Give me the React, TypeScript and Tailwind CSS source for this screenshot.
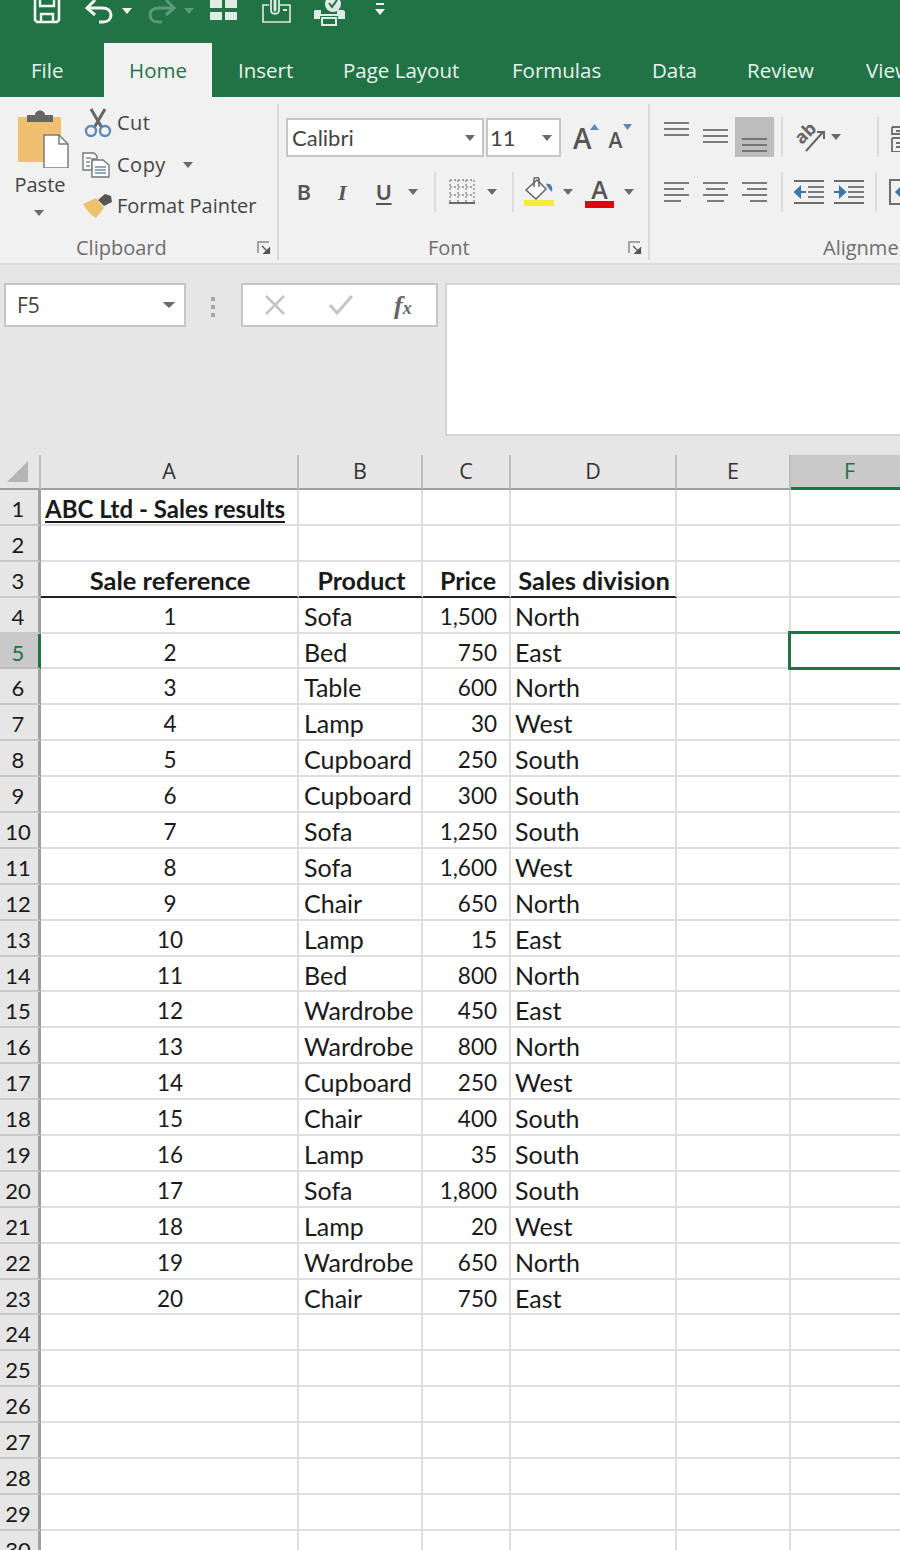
import React from "react";

const ui = "font-['Open_Sans','Noto_Sans',sans-serif]";
const cal = "font-['Lato','Liberation_Sans',sans-serif]";

type Row = [string, string, string, string];
const rows: Row[] = [
  ["1", "Sofa", "1,500", "North"],
  ["2", "Bed", "750", "East"],
  ["3", "Table", "600", "North"],
  ["4", "Lamp", "30", "West"],
  ["5", "Cupboard", "250", "South"],
  ["6", "Cupboard", "300", "South"],
  ["7", "Sofa", "1,250", "South"],
  ["8", "Sofa", "1,600", "West"],
  ["9", "Chair", "650", "North"],
  ["10", "Lamp", "15", "East"],
  ["11", "Bed", "800", "North"],
  ["12", "Wardrobe", "450", "East"],
  ["13", "Wardrobe", "800", "North"],
  ["14", "Cupboard", "250", "West"],
  ["15", "Chair", "400", "South"],
  ["16", "Lamp", "35", "South"],
  ["17", "Sofa", "1,800", "South"],
  ["18", "Lamp", "20", "West"],
  ["19", "Wardrobe", "650", "North"],
  ["20", "Chair", "750", "East"],
];

const Caret = ({ color = "#6a6a6a", className = "" }: { color?: string; className?: string }) => (
  <svg width="10" height="6" viewBox="0 0 10 6" className={`shrink-0 ${className}`}>
    <path d="M0 0H10L5 6Z" fill={color} />
  </svg>
);

const Sep = ({ className = "" }: { className?: string }) => <div className={`w-[2px] h-[40px] bg-[#dcdcdc] shrink-0 ${className}`} />;

const Launcher = ({ className = "" }: { className?: string }) => (
  <svg width="14" height="14" viewBox="0 0 14 14" className={`shrink-0 ${className}`}>
    <path d="M1 12V1H12" fill="none" stroke="#8a8a8a" strokeWidth="1.5" />
    <path d="M5 5L11 11M12.5 7V12.5H7Z" fill="#555" stroke="#555" strokeWidth="1.2" />
  </svg>
);

const Lines = ({ ys, spans, highlight = false }: { ys: number[]; spans: [number, number][]; highlight?: boolean }) => (
  <svg width="39" height="40" viewBox="0 0 39 40" className={highlight ? "bg-[#bdbdbd] shrink-0" : "shrink-0"}>
    {ys.map((y, i) => (
      <path key={i} d={`M${spans[i][0]} ${y}H${spans[i][1]}`} stroke="#6e6e6e" strokeWidth="1.8" />
    ))}
  </svg>
);

const IndentIcon = ({ flip, className = "" }: { flip?: boolean; className?: string }) => (
  <svg width="30" height="26" viewBox="0 0 30 26" className={`shrink-0 ${className}`}>
    <path d="M0 2H30M0 24H30" stroke="#6e6e6e" strokeWidth="2" />
    <path d="M14 8H30M14 13H30M14 18H30" stroke="#7a7a7a" strokeWidth="1.8" />
    {flip ? (
      <path d="M0 13H8M6 8.5L11 13L6 17.5Z" fill="#3f76a8" stroke="#3f76a8" strokeWidth="2.2" />
    ) : (
      <path d="M12 13H4M6 8.5L1 13L6 17.5Z" fill="#3f76a8" stroke="#3f76a8" strokeWidth="2.2" />
    )}
  </svg>
);

const Qat = () => (
  <div className="h-[43px] flex items-start">
    <svg width="28" height="24" viewBox="0 0 28 24" className="ml-[33px] shrink-0">
      <path d="M2 -4V20L4 22H24L26 20V-4" fill="none" stroke="#f2f7f4" strokeWidth="2.6" />
      <path d="M7 0V6H21V0" fill="none" stroke="#f2f7f4" strokeWidth="2.4" />
      <path d="M8 22V14H20V22" fill="none" stroke="#f2f7f4" strokeWidth="2.4" />
    </svg>
    <svg width="28" height="24" viewBox="0 0 28 24" className="ml-[24px] shrink-0">
      <path d="M3 8H17C23 8 26 11 26 15C26 19 23 22 18 22H14" fill="none" stroke="#f2f7f4" strokeWidth="3" />
      <path d="M10 0L2 8L10 15" fill="none" stroke="#f2f7f4" strokeWidth="3" />
    </svg>
    <Caret color="#f2f7f4" className="ml-[9px] mt-[8px]" />
    <svg width="28" height="24" viewBox="0 0 28 24" className="ml-[16px] shrink-0">
      <path d="M25 8H11C5 8 2 11 2 15C2 19 5 22 10 22H14" fill="none" stroke="#5d9a7c" strokeWidth="3" />
      <path d="M18 0L26 8L18 15" fill="none" stroke="#5d9a7c" strokeWidth="3" />
    </svg>
    <Caret color="#5d9a7c" className="ml-[8px] mt-[8px]" />
    <svg width="29" height="24" viewBox="0 0 29 24" className="ml-[15px] shrink-0">
      <path d="M1 0H13V8H1ZM16 0H28V8H16Z" fill="#dfebe5" />
      <path d="M1 12H13V20H1ZM16 12H28V20H16Z" fill="#dfebe5" />
    </svg>
    <svg width="31" height="24" viewBox="0 0 31 24" className="ml-[23px] shrink-0">
      <path d="M8 5H2V22H29V5H19" fill="none" stroke="#dfebe5" strokeWidth="1.6" />
      <path d="M10 0V10C10 15 18 15 18 10V-2M13.5 0V10C13.5 11 14.5 11 14.5 10V0" fill="none" stroke="#dfebe5" strokeWidth="1.8" />
      <path d="M22 9H26V11H22Z" fill="#dfebe5" />
    </svg>
    <svg width="32" height="26" viewBox="0 0 32 26" className="ml-[21px] shrink-0">
      <path d="M2 10H8V14H24V10H30C31 10 32 11 32 12V19H25V16H7V19H1V11Z" fill="#dfebe5" />
      <path d="M9 18H23V25H9Z" fill="none" stroke="#dfebe5" strokeWidth="2" />
      <circle cx="20" cy="4" r="8" fill="#dfebe5" />
      <path d="M16 3L19 7L24 0" fill="none" stroke="#217346" strokeWidth="2" />
    </svg>
    <svg width="12" height="18" viewBox="0 0 12 18" className="ml-[29px] shrink-0">
      <path d="M2 4H10" stroke="#eef4f0" strokeWidth="2" />
      <path d="M1 9H11L6 15Z" fill="#eef4f0" />
    </svg>
  </div>
);

const Tabs = () => (
  <div className={`h-[54px] flex items-stretch text-[20.5px] text-[#e9f2ed] whitespace-nowrap overflow-hidden ${ui}`}>
    <span className="ml-[31px] w-[73px] self-center shrink-0">File</span>
    <span className="w-[108px] bg-[#f1f1f1] text-[#217346] flex items-center justify-center shrink-0">Home</span>
    <span className="ml-[26px] w-[105px] self-center shrink-0">Insert</span>
    <span className="w-[169px] self-center shrink-0">Page Layout</span>
    <span className="w-[140px] self-center shrink-0">Formulas</span>
    <span className="w-[95px] self-center shrink-0">Data</span>
    <span className="w-[119px] self-center shrink-0">Review</span>
    <span className="self-center shrink-0">View</span>
  </div>
);

const Clipboard = () => (
  <div className="w-[279px] h-[156px] border-r-2 border-[#d8d8d8] flex flex-col shrink-0">
    <div className="h-[132px] flex">
      <div className="w-[80px] shrink-0 flex flex-col items-center">
        <svg width="56" height="60" viewBox="0 0 56 60" className="mt-[4px] shrink-0 translate-x-[1px]">
          <path d="M5 9H48V54H5Z" fill="#eec06f" />
          <path d="M14 14V7H22C22 1 32 1 32 7H40V14Z" fill="#666" />
          <path d="M31 27H46L55 36V60H31Z" fill="#fff" stroke="#7c7c7c" strokeWidth="1.5" />
          <path d="M46 27V36H55" fill="none" stroke="#7c7c7c" strokeWidth="1.5" />
        </svg>
        <span className={`text-[20px] leading-[28px] mt-[3px] text-[#444] ${ui}`}>Paste</span>
        <Caret className="mt-[11px] -translate-x-[1px]" />
      </div>
      <div className={`ml-[2px] flex flex-col gap-[5.5px] mt-[1px] text-[20px] text-[#444] whitespace-nowrap ${ui}`}>
        <div className="h-[36px] flex items-center">
          <svg width="28" height="30" viewBox="0 0 28 30" className="ml-[2px] shrink-0">
            <path d="M7 1L18 20M21 1L10 20" stroke="#666" strokeWidth="3" />
            <circle cx="7" cy="23" r="5" fill="none" stroke="#5e8ab8" strokeWidth="2.4" />
            <circle cx="21" cy="23" r="5" fill="none" stroke="#5e8ab8" strokeWidth="2.4" />
          </svg>
          <span className="ml-[5px] tracking-[0.4px]">Cut</span>
        </div>
        <div className="h-[36px] flex items-center">
          <svg width="28" height="26" viewBox="0 0 28 26" className="shrink-0">
            <path d="M1 1H12L15 4V7H10V18H1Z" fill="#fff" stroke="#777" strokeWidth="1.4" />
            <path d="M10 8H21L27 13V25H10Z" fill="#fff" stroke="#777" strokeWidth="1.4" />
            <path d="M4 6H9M4 10H8M4 14H8M13 15H24M13 18H24M13 21H24" stroke="#6a8ab0" strokeWidth="1.3" />
          </svg>
          <span className="ml-[7px] tracking-[0.5px]">Copy</span>
          <Caret className="ml-[17px]" />
        </div>
        <div className="h-[36px] flex items-center">
          <svg width="30" height="26" viewBox="0 0 30 26" className="ml-[1px] shrink-0">
            <path d="M0 11L13 5L21 15L13 25C8 22 3 17 0 11Z" fill="#eec06f" />
            <path d="M15 7L22 1L28 3L29 9L21 13Z" fill="#555" />
          </svg>
          <span className="ml-[4px]">Format Painter</span>
        </div>
      </div>
    </div>
    <div className={`h-[24px] flex items-center text-[20px] text-[#6e6e6e] pl-[76px] pr-[6px] ${ui}`}>
      <span>Clipboard</span>
      <Launcher className="ml-auto" />
    </div>
  </div>
);

const Font = () => (
  <div className="w-[371px] h-[156px] border-r-2 border-[#d8d8d8] flex flex-col shrink-0">
    <div className="h-[132px] pt-[14px] flex flex-col">
      <div className="h-[39px] flex items-center">
        <div className={`ml-[7px] w-[198px] h-[39px] bg-white border-2 border-[#c6c6c6] flex items-center pl-[4px] pr-[7px] text-[22px] text-[#444] ${cal}`}>
          <span>Calibri</span>
          <Caret className="ml-auto" />
        </div>
        <div className={`ml-[2px] w-[75px] h-[39px] bg-white border-2 border-[#c6c6c6] flex items-center pl-[2px] pr-[7px] text-[22px] text-[#444] ${cal}`}>
          <span>11</span>
          <Caret className="ml-auto" />
        </div>
        <div className={`ml-[12px] flex items-start text-[#555] ${ui}`}>
          <span className="text-[28px] leading-[38px] font-semibold">A</span>
          <svg width="9" height="6" viewBox="0 0 9 6" className="mt-[5px] -ml-[2px] shrink-0"><path d="M0 6H9L4.5 0Z" fill="#5b88b5" /></svg>
          <span className="ml-[10px] text-[21px] leading-[34px] mt-[4px] font-semibold">A</span>
          <svg width="9" height="6" viewBox="0 0 9 6" className="mt-[5px] ml-[1px] shrink-0"><path d="M0 0H9L4.5 6Z" fill="#5b88b5" /></svg>
        </div>
      </div>
      <div className="h-[40px] mt-[15px] flex items-center text-[#555]">
        <span className={`ml-[18px] w-[16px] text-[21px] font-bold ${cal}`}>B</span>
        <span className="ml-[25px] w-[14px] text-[22px] italic font-bold font-['Liberation_Serif',serif]">I</span>
        <span className={`ml-[24px] w-[16px] text-[21px] font-bold underline underline-offset-[3px] ${cal}`}>U</span>
        <Caret className="ml-[16px]" />
        <Sep className="ml-[16px]" />
        <svg width="26" height="26" viewBox="0 0 26 26" className="ml-[13px] shrink-0">
          <path d="M1 1H25V25M1 1V24M1 8H25M1 16H25M9 1V24M17 1V24" fill="none" stroke="#8c8c8c" strokeWidth="1.4" strokeDasharray="2 2" />
          <path d="M0 24H26" stroke="#6a6a6a" strokeWidth="2" />
        </svg>
        <Caret className="ml-[12px]" />
        <Sep className="ml-[15px]" />
        <svg width="31" height="30" viewBox="0 0 31 30" className="ml-[10px] shrink-0">
          <path d="M13 3L2 13L12 22L22 12Z" fill="#fff" stroke="#666" strokeWidth="1.5" />
          <path d="M10 10V2C10 0 15 0 15 2V10" fill="none" stroke="#666" strokeWidth="1.5" />
          <path d="M22 7C27 6 29 9 28 15L25 12Z" fill="#4a7fb3" />
          <path d="M0 23H30V29H0Z" fill="#f3ec3a" />
        </svg>
        <Caret className="ml-[8px]" />
        <div className="ml-[12px] w-[29px] flex flex-col items-center shrink-0">
          <span className={`text-[25px] leading-[24px] font-semibold ${ui}`}>A</span>
          <div className="w-[29px] h-[7px] bg-[#e4000f]" />
        </div>
        <Caret className="ml-[10px]" />
      </div>
    </div>
    <div className={`h-[24px] flex items-center text-[20px] text-[#6e6e6e] pl-[149px] pr-[6px] ${ui}`}>
      <span>Font</span>
      <Launcher className="ml-auto" />
    </div>
  </div>
);

const w25: [number, number] = [7, 32];

const Alignment = () => (
  <div className="flex-1 min-w-0 h-[156px] flex flex-col overflow-hidden">
    <div className="h-[132px] pt-[13px] flex flex-col">
      <div className="h-[40px] flex items-center pl-[7px]">
        <Lines ys={[6, 12, 18]} spans={[w25, w25, w25]} />
        <Lines ys={[13, 19, 25]} spans={[w25, w25, w25]} />
        <Lines ys={[22, 28, 34]} spans={[w25, w25, w25]} highlight />
        <Sep className="ml-[7px]" />
        <svg width="32" height="30" viewBox="0 0 32 30" className="ml-[11px] shrink-0">
          <text x="1" y="17" transform="rotate(-45 12 12)" fontSize="18" fontWeight="700" fill="#666" fontFamily="'Open Sans',sans-serif">ab</text>
          <path d="M12 29L29 10M23 10H30V17" fill="none" stroke="#666" strokeWidth="2" />
        </svg>
        <Caret className="ml-[5px]" />
        <Sep className="ml-[36px]" />
        <svg width="20" height="30" viewBox="0 0 20 30" className="ml-[12px] shrink-0">
          <path d="M1 5H20M1 5V12H20M1 16H20M1 16V30H20M5 9H20M5 21H20M5 25H20" fill="none" stroke="#6e6e6e" strokeWidth="1.8" />
        </svg>
      </div>
      <div className="h-[40px] mt-[15px] flex items-center pl-[7px]">
        <Lines ys={[11, 17, 23, 29]} spans={[[7, 32], [7, 27], [7, 32], [7, 24]]} />
        <Lines ys={[11, 17, 23, 29]} spans={[[7, 32], [10, 29], [7, 32], [11, 28]]} />
        <Lines ys={[11, 17, 23, 29]} spans={[[7, 32], [12, 32], [7, 32], [15, 32]]} />
        <Sep className="ml-[7px]" />
        <IndentIcon className="ml-[11px]" />
        <IndentIcon flip className="ml-[10px]" />
        <Sep className="ml-[11px]" />
        <svg width="20" height="28" viewBox="0 0 20 28" className="ml-[12px] shrink-0">
          <path d="M20 2H1V26H20" fill="none" stroke="#6e6e6e" strokeWidth="2" />
          <path d="M8 14H20M12 9L7 14L12 19Z" fill="#3f76a8" stroke="#3f76a8" strokeWidth="1.5" />
        </svg>
      </div>
    </div>
    <div className={`h-[24px] flex items-center text-[20px] text-[#6e6e6e] pl-[173px] whitespace-nowrap ${ui}`}>Alignment</div>
  </div>
);

const FormulaBar = () => (
  <div className="h-[190px] shrink-0 bg-[#e6e6e6] pt-[18px] pl-[4px] flex items-start">
    <div className={`w-[182px] h-[44px] bg-white border-2 border-[#c6c6c6] flex items-center pl-[11px] pr-[10px] text-[21px] text-[#444] ${ui}`}>
      <span className="translate-y-[1px]">F5</span>
      <Caret color="#6a6a6a" className="ml-auto scale-x-125" />
    </div>
    <div className="ml-[25px] mt-[14px] flex flex-col gap-[4px]">
      <div className="w-[4px] h-[4px] bg-[#a8a8a8]" />
      <div className="w-[4px] h-[4px] bg-[#a8a8a8]" />
      <div className="w-[4px] h-[4px] bg-[#a8a8a8]" />
    </div>
    <div className="ml-[26px] w-[197px] h-[44px] bg-white border-2 border-[#c6c6c6] flex items-center">
      <svg width="22" height="22" viewBox="0 0 22 22" className="ml-[21px] shrink-0">
        <path d="M2 2L20 20M20 2L2 20" stroke="#c4c4c4" strokeWidth="2.6" />
      </svg>
      <svg width="26" height="22" viewBox="0 0 26 22" className="ml-[42px] shrink-0">
        <path d="M2 11L9 19L24 2" fill="none" stroke="#c4c4c4" strokeWidth="3" />
      </svg>
      <span className="ml-[40px] text-[26px] italic font-bold text-[#666] font-['Liberation_Serif',serif]">
        f<span className="text-[18px]">x</span>
      </span>
    </div>
    <div className="ml-[7px] flex-1 h-[153px] bg-white border-2 border-r-0 border-[#d4d4d4]" />
  </div>
);

const colH = "flex items-center justify-center border-r-2 border-[#bdbdbd] border-b-2 border-b-[#9e9e9e] bg-[#e6e6e6]";
const gridCols = "grid grid-cols-[41px_258px_124px_88px_166px_114px_1fr] shrink-0";
const cell = "border-r-2 border-b-2 border-[#dedede] flex items-center min-w-0";

const Header = () => (
  <div className={`${gridCols} grid-rows-[35px] h-[35px] text-[21.5px] text-[#333] ${ui}`}>
    <div className={colH}>
      <svg width="22" height="22" viewBox="0 0 22 22" className="-ml-[4px]"><path d="M21 0V21H0Z" fill="#b5b5b5" /></svg>
    </div>
    {["A", "B", "C", "D", "E"].map((c) => (
      <div key={c} className={colH}>{c}</div>
    ))}
    <div className="flex items-center justify-center bg-[#c9c9c9] border-b-[3px] border-[#217346] text-[#217346] pl-[8px]">F</div>
  </div>
);

const SheetRow = ({ n, data, bold, hBorder, titleRow }: { n: number; data: React.ReactNode[]; bold?: boolean; hBorder?: boolean; titleRow?: boolean }) => {
  const sel = n === 5;
  const lower = hBorder ? "border-b-[#222]" : "";
  return (
    <div className={`${gridCols} grid-rows-[35.9px] h-[35.9px] leading-[30px] text-[25px] text-[#1a1a1a] ${cal} ${bold ? "font-bold" : ""}`}>
      <div
        className={`flex items-center justify-center border-b-2 border-r-[3px] pr-[2px] pt-[4px] font-normal text-[22px] ${
          sel ? "bg-[#c9c9c9] text-[#217346] border-r-[#217346] border-b-[#bdbdbd]" : "bg-[#e6e6e6] border-r-[#a0a0a0] border-b-[#c8c8c8]"
        }`}
      >
        {n}
      </div>
      {data.map((d, i) => (
        <div
          key={i}
          className={`${cell} ${i < 4 ? lower : ""} ${i === 0 && !titleRow ? "justify-center" : ""} ${i === 0 && !bold && !titleRow ? "text-[22.5px] pl-[2px] pt-[4px]" : ""} ${i === 0 && titleRow ? "pt-[4px]" : ""} ${i === 1 ? "pl-[5px] pt-[2px]" : ""} ${
            i === 2 ? `justify-end pr-[12px] ${bold ? "pt-[2px]" : "text-[22.5px] pt-[4px]"}` : ""
          } ${i === 3 ? "pl-[4px] pt-[2px]" : ""}`}
        >
          {d}
        </div>
      ))}
      <div className="border-b-2 border-[#dedede] relative">
        {sel && <div className="absolute -left-[3px] -top-[3px] -right-[10px] -bottom-[3px] border-[3px] border-[#217346]" />}
      </div>
    </div>
  );
};

export default function App() {
  const blank: React.ReactNode[] = ["", "", "", "", ""];
  return (
    <div className="w-[900px] h-[1550px] overflow-hidden bg-white flex flex-col">
      <div className="h-[97px] bg-[#217346] shrink-0">
        <Qat />
        <Tabs />
      </div>
      <div className="h-[168px] shrink-0 bg-[#f1f1f1] border-b-2 border-[#dcdcdc] pt-[7px] flex">
        <Clipboard />
        <Font />
        <Alignment />
      </div>
      <FormulaBar />
      <Header />
      <SheetRow
        n={1}
        titleRow
        data={[
          <span className="font-bold text-[24px] underline decoration-2 underline-offset-[3px] whitespace-nowrap pl-[4px]">ABC Ltd - Sales results</span>,
          "",
          "",
          "",
          "",
        ]}
      />
      <SheetRow n={2} data={blank} />
      <SheetRow n={3} bold hBorder data={[
        <span className="text-[25.5px] pl-[2px] pt-[2px]">Sale reference</span>,
        <span className="w-full text-center -ml-[1px]">Product</span>,
        <span className="w-full text-center pl-[16px] text-[25px]">Price</span>,
        <span className="w-full text-center -ml-[1px] text-[25.5px]">Sales division</span>,
        "",
      ]} />
      {rows.map((r, i) => (
        <SheetRow key={i} n={i + 4} data={[r[0], r[1], r[2], r[3], ""]} />
      ))}
      {Array.from({ length: 8 }, (_, i) => (
        <SheetRow key={`e${i}`} n={24 + i} data={blank} />
      ))}
    </div>
  );
}
